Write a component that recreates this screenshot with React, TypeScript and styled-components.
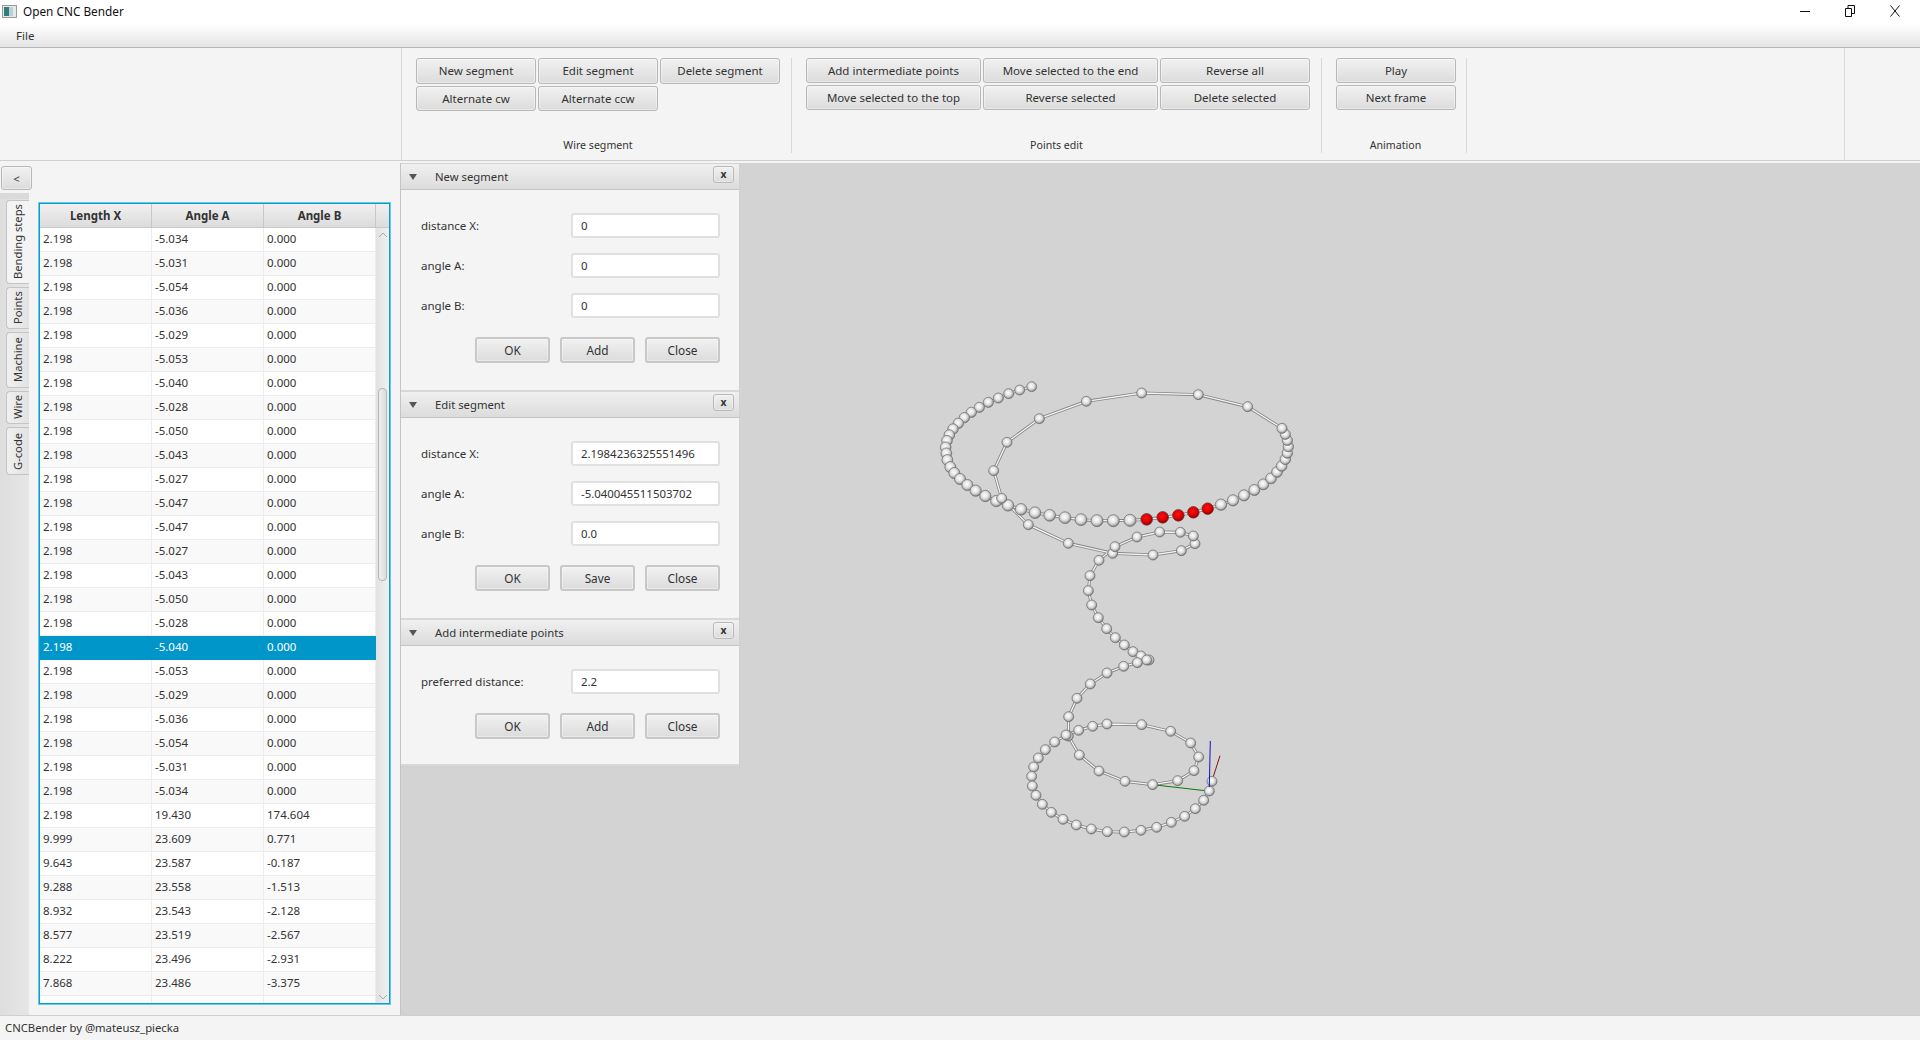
import React from "react";
import styled, { createGlobalStyle } from "styled-components";

const GlobalStyle = createGlobalStyle`
  html, body { margin: 0; padding: 0; height: 100%; overflow: hidden; }
  body {
    font-family: "Noto Sans", "Open Sans", sans-serif;
    font-size: 11.5px;
    color: #333;
    background: #f4f4f4;
  }
  * { box-sizing: border-box; }
`;

const Window = styled.div`
  width: 1920px;
  height: 1040px;
  display: flex;
  flex-direction: column;
  overflow: hidden;
`;

const TitleBar = styled.header`
  height: 24px;
  flex: none;
  background: #fff;
  display: flex;
  align-items: center;
  padding: 0 0 2px 2px;
  gap: 6px;
  color: #111;
  font-size: 11.8px;
`;

const TitleText = styled.span`
  flex: 1;
`;

const WindowControls = styled.div`
  display: flex;
  align-items: center;
  padding-right: 20px;
  gap: 35px;
`;

const MenuBar = styled.nav`
  height: 24px;
  flex: none;
  background: linear-gradient(#ffffff, #e4e4e4);
  border-bottom: 1px solid #b5b5b5;
  display: flex;
  align-items: center;
  padding-left: 16px;
`;

const Ribbon = styled.section`
  height: 113px;
  flex: none;
  background: #f4f4f4;
  border-bottom: 1px solid #cfcfcf;
  display: flex;
`;

const RibbonSpacer = styled.div<{ $width: number }>`
  width: ${(p) => p.$width}px;
  border-right: 1px solid #d8d8d8;
  flex: none;
`;

const RibbonGroup = styled.div<{ $width: number; $padding: number }>`
  width: ${(p) => p.$width}px;
  flex: none;
  margin: 10px 0 7px;
  padding: 0 0 0 ${(p) => p.$padding}px;
  border-right: 1px solid #d8d8d8;
  display: flex;
  flex-direction: column;
`;

const ButtonGrid = styled.div<{ $columns: string; $row: number }>`
  display: grid;
  grid-template-columns: ${(p) => p.$columns};
  grid-auto-rows: ${(p) => p.$row}px;
  gap: 2px;
`;

const GroupLabel = styled.div<{ $inset: number }>`
  margin-top: auto;
  height: 16px;
  line-height: 16px;
  font-size: 10.6px;
  text-align: center;
  padding-right: ${(p) => p.$inset}px;
`;

const Button = styled.button`
  font: inherit;
  color: #333;
  padding: 0;
  border: 1px solid #b8b8b8;
  border-radius: 3px;
  background: linear-gradient(#f1f1f1, #dcdcdc);
  box-shadow: inset 0 0 0 1px rgba(255, 255, 255, 0.35);
`;

const Main = styled.main`
  flex: 1;
  min-height: 0;
  display: flex;
  border-top: 2px solid #f4f4f4;
`;

const SidePanel = styled.aside`
  width: 400px;
  flex: none;
  background: #f4f4f4;
  display: flex;
  flex-direction: column;
  padding-top: 3px;
`;

const CollapseButton = styled(Button)`
  width: 31px;
  height: 24px;
  margin: 0 0 3px 1px;
  flex: none;
`;

const TabArea = styled.div`
  flex: 1;
  min-height: 0;
  display: flex;
`;

const TabStrip = styled.div`
  width: 29px;
  flex: none;
  background: linear-gradient(90deg, #dedede, #e6e6e6);
  border-top: 6px solid #dadada;
  padding: 1px 0 0 6px;
  display: flex;
  flex-direction: column;
  gap: 3px;
`;

const Tab = styled.div<{ $height: number; $active?: boolean }>`
  height: ${(p) => p.$height}px;
  background: ${(p) => (p.$active ? "#f4f4f4" : "linear-gradient(90deg, #e2e2e2, #f0f0f0)")};
  writing-mode: vertical-rl;
  transform: rotate(180deg);
  border: 1px solid #c4c4c4;
  border-left: none;
  border-radius: 0 4px 4px 0;
  display: flex;
  align-items: center;
  justify-content: center;
  font-size: 11.2px;
  line-height: 1;
`;

const TableHolder = styled.div`
  flex: 1;
  min-width: 0;
  padding: 10px 10px 11px;
`;

const Table = styled.div`
  height: 100%;
  border: 1px solid #039ed3;
  box-shadow: 0 0 0 1px #6cc6e6;
  background: #fff;
  display: flex;
  flex-direction: column;
`;

const TableHead = styled.div`
  height: 24px;
  flex: none;
  display: grid;
  grid-template-columns: 112px 112px 112px 1fr;
  background: linear-gradient(#f0f0f0, #dcdcdc);
  border-bottom: 1px solid #c8c8c8;
`;

const HeadCell = styled.div`
  display: flex;
  align-items: center;
  justify-content: center;
  font-weight: 700;
  font-size: 11.5px;
  border-right: 1px solid #c8c8c8;
`;

const TableBody = styled.div`
  flex: 1;
  min-height: 0;
  display: flex;
`;

const Rows = styled.div`
  width: 336px;
  flex: none;
  overflow: hidden;
`;

const Row = styled.div<{ $odd: boolean; $selected: boolean }>`
  height: 24px;
  display: grid;
  grid-template-columns: 112px 112px 112px;
  background: ${(p) => (p.$selected ? "#0096c9" : p.$odd ? "#f9f9f9" : "#fff")};
  color: ${(p) => (p.$selected ? "#fff" : "#333")};
  border-bottom: 1px solid ${(p) => (p.$selected ? "#0096c9" : "#ececec")};
`;

const Cell = styled.div<{ $selected: boolean }>`
  display: flex;
  align-items: center;
  padding: 0 0 2px 3px;
  border-right: 1px solid ${(p) => (p.$selected ? "#0096c9" : "#ececec")};
`;

const ScrollBar = styled.div`
  flex: 1;
  background: linear-gradient(90deg, #e2e2e2, #f0f0f0);
  display: flex;
  flex-direction: column;
  align-items: center;
  padding: 4px 0 3px;
`;

const ScrollThumb = styled.div`
  width: 9px;
  height: 193px;
  margin-top: 150px;
  border: 1px solid #b5b5b5;
  border-radius: 4px;
  background: linear-gradient(90deg, #efefef, #dcdcdc);
`;

const ScrollArrow = styled.svg<{ $end?: boolean }>`
  width: 10px;
  height: 6px;
  flex: none;
  margin-top: ${(p) => (p.$end ? "auto" : "0")};
`;

const Viewport = styled.div`
  flex: 1;
  min-width: 0;
  display: flex;
  align-items: flex-start;
  background: #d3d3d3;
  border-left: 1px solid #c4c4c4;
`;

const Accordion = styled.div`
  width: 339px;
  flex: none;
  margin-top: 1px;
  background: #f4f4f4;
  border-right: 1px solid #d0d0d0;
  border-bottom: 1px solid #d0d0d0;
`;

const PaneTitle = styled.div`
  height: 26px;
  display: flex;
  align-items: center;
  padding: 0 5px 0 8px;
  background: linear-gradient(#f0f0f0, #dcdcdc);
  border-bottom: 1px solid #c4c4c4;
  font-size: 11.3px;
`;

const PaneName = styled.span`
  flex: 1;
  margin-left: 18px;
`;

const Arrow = styled.span`
  width: 0;
  height: 0;
  border-left: 4px solid transparent;
  border-right: 4px solid transparent;
  border-top: 6px solid #555;
`;

const PaneClose = styled(Button)`
  width: 21px;
  height: 17px;
  margin-top: -4px;
  font-size: 10.5px;
  font-weight: 700;
  line-height: 1;
`;

const PaneBody = styled.div<{ $bottom: number }>`
  padding: 23px 19px ${(p) => p.$bottom}px 20px;
  display: flex;
  flex-direction: column;
  border-bottom: 2px solid #d8d8d8;
`;

const FieldRow = styled.label`
  height: 25px;
  margin-bottom: 15px;
  display: flex;
  align-items: center;
  justify-content: space-between;
`;

const FieldInput = styled.input`
  width: 149px;
  height: 25px;
  font: inherit;
  font-size: 11.4px;
  color: #333;
  padding: 0 7px 1px 8px;
  border: 2px solid #e0e0e0;
  border-radius: 3px;
  background: #fff;
  outline: none;
`;

const PaneActions = styled.div`
  margin-top: 4px;
  display: flex;
  justify-content: flex-end;
  gap: 10px;
`;

const ActionButton = styled(Button)`
  width: 75px;
  height: 26px;
  font-size: 11.8px;
  border-width: 2px;
  border-color: #c8c8c8;
`;

const Scene = styled.svg`
  flex: 1;
  min-width: 0;
  height: 852px;
  display: block;
`;

const StatusBar = styled.footer`
  height: 25px;
  flex: none;
  background: #f4f4f4;
  border-top: 1px solid #cfcfcf;
  display: flex;
  align-items: center;
  padding: 0 0 2px 5px;
  font-size: 11.3px;
`;

const base = [
  "-5.034", "-5.031", "-5.054", "-5.036", "-5.029", "-5.053", "-5.040", "-5.028",
  "-5.050", "-5.043", "-5.027", "-5.047", "-5.047", "-5.027", "-5.043", "-5.050",
  "-5.028", "-5.040", "-5.053", "-5.029", "-5.036", "-5.054", "-5.031", "-5.034",
];

const rows: string[][] = [
  ...base.map((a) => ["2.198", a, "0.000"]),
  ["2.198", "19.430", "174.604"],
  ["9.999", "23.609", "0.771"],
  ["9.643", "23.587", "-0.187"],
  ["9.288", "23.558", "-1.513"],
  ["8.932", "23.543", "-2.128"],
  ["8.577", "23.519", "-2.567"],
  ["8.222", "23.496", "-2.931"],
  ["7.868", "23.486", "-3.375"],
  ["7.513", "23.480", "-3.793"],
];

const SELECTED_ROW = 17;

type P = [number, number];

// beads read from the reference, in two blocks of 3x crop coordinates
const upper = (pts: P[]): P[] => pts.map(([x, y]) => [930 + x / 3, 370 + y / 3]);
const lower = (pts: P[]): P[] => pts.map(([x, y]) => [1000 + x / 3, 590 + y / 3]);

const wireStart = upper([
  [305, 50], [269, 60], [236, 71], [205, 84], [175, 97], [148, 112], [124, 127], [103, 143],
  [85, 160], [69, 177], [58, 195], [51, 212], [47, 232], [49, 250], [52, 270], [61, 291],
  [73, 309], [90, 327], [112, 345], [137, 362], [166, 378], [199, 393], [234, 406], [273, 418],
  [315, 428], [359, 436], [405, 443], [453, 449], [501, 452], [550, 452], [600, 451],
]);
const wireRed = upper([[650, 448], [698, 442], [745, 436], [790, 427], [833, 416]]);
const wireMid = upper([
  [873, 404], [909, 391], [942, 376], [973, 360], [1000, 343], [1023, 325], [1041, 306],
  [1055, 288], [1066, 268], [1072, 249], [1075, 230], [1072, 211], [1066, 193], [1056, 175],
  [953, 110], [805, 74], [635, 69], [469, 94], [328, 146], [231, 217], [191, 302], [215, 385],
  [295, 464], [415, 520], [548, 550], [669, 555], [754, 542], [795, 521], [790, 498], [751, 487],
  [689, 486], [621, 501], [555, 530], [507, 571], [480, 617], [475, 662],
]);
const wireEnd = lower([
  [275, 45], [295, 83], [320, 116], [346, 143], [373, 165], [399, 185], [423, 198], [447, 210],
  [440, 210], [412, 218], [371, 229], [321, 249], [271, 282], [231, 325], [206, 380], [205, 438],
  [238, 495], [297, 543], [375, 574], [458, 584], [533, 572], [582, 542], [596, 501], [572, 459],
  [512, 424], [425, 404], [321, 402], [278, 409], [236, 421], [198, 435], [164, 456], [136, 479],
  [115, 504], [101, 531], [95, 559], [97, 588], [108, 616], [127, 643], [154, 667], [189, 688],
  [229, 705], [274, 717], [322, 725], [373, 726], [423, 721], [470, 712], [514, 697], [554, 679],
  [586, 656], [611, 631], [628, 603], [636, 574],
]);

const wire: P[] = [...wireStart, ...wireRed, ...wireMid, ...wireEnd];
const wirePath = wire.map(([x, y]) => `${x.toFixed(1)},${y.toFixed(1)}`).join(" ");

// near part of the top ring is drawn bigger, as the view has perspective
const beadRadius = (i: number) => {
  if (i < wireStart.length) return 4.9 + (1.2 * i) / wireStart.length;
  if (i < wireStart.length + wireRed.length + 14) return 5.9 - (0.9 * (i - wireStart.length)) / 19;
  return 5;
};

function WireScene() {
  return (
    <Scene viewBox="740 163 1180 852">
      <defs>
        <radialGradient id="bead" cx="45%" cy="42%" r="58%">
          <stop offset="0%" stopColor="#ffffff" />
          <stop offset="50%" stopColor="#e2e2e2" />
          <stop offset="80%" stopColor="#b4b4b4" />
          <stop offset="100%" stopColor="#666666" />
        </radialGradient>
        <radialGradient id="beadRed" cx="45%" cy="40%" r="60%">
          <stop offset="0%" stopColor="#ff1010" />
          <stop offset="70%" stopColor="#d80000" />
          <stop offset="100%" stopColor="#7a0000" />
        </radialGradient>
      </defs>
      <polyline points={wirePath} fill="none" stroke="#858585" strokeWidth={3} />
      <polyline points={wirePath} fill="none" stroke="#f4f4f4" strokeWidth={1.3} />
      <line x1={1152.7} y1={784.7} x2={1208} y2={791} stroke="#0a7a0a" strokeWidth={1} />
      <line x1={1220} y1={755.7} x2={1210} y2={787} stroke="#8a1010" strokeWidth={1} />
      {wire.map(([x, y], i) => (
        <circle key={i} cx={x} cy={y} r={beadRadius(i)} fill="url(#bead)" stroke="#777" strokeWidth={0.8} />
      ))}
      {wireRed.map(([x, y], i) => (
        <circle key={i} cx={x} cy={y} r={5.6} fill="url(#beadRed)" stroke="#8a1a1a" strokeWidth={0.6} />
      ))}
      <line x1={1210.3} y1={741} x2={1209.3} y2={787} stroke="#1010c8" strokeWidth={1} />
    </Scene>
  );
}

function AppIcon() {
  return (
    <svg width="15" height="13" viewBox="0 0 15 13">
      <rect x="0.5" y="0.5" width="14" height="12" fill="#e8e8e8" stroke="#9a9a9a" />
      <rect x="2" y="2" width="5" height="9" fill="#2f7d7d" />
      <rect x="7" y="2" width="4" height="9" fill="#b9d0d8" />
    </svg>
  );
}

function MinIcon() {
  return (
    <svg width="10" height="10" viewBox="0 0 10 10">
      <path d="M0 5.5h10" stroke="#111" fill="none" />
    </svg>
  );
}

function RestoreIcon() {
  return (
    <svg width="10" height="12" viewBox="0 0 10 12">
      <path d="M0.5 3.5h6v8h-6zM3 3.5v-3h6.5v8h-3" stroke="#111" fill="none" />
    </svg>
  );
}

function CloseIcon() {
  return (
    <svg width="10" height="12" viewBox="0 0 10 12">
      <path d="M0.5 0.5l9 11M9.5 0.5l-9 11" stroke="#111" fill="none" />
    </svg>
  );
}

type PaneProps = {
  title: string;
  fields: [string, string][];
  action: string;
  bottom: number;
};

function Pane({ title, fields, action, bottom }: PaneProps) {
  return (
    <section>
      <PaneTitle>
        <Arrow />
        <PaneName>{title}</PaneName>
        <PaneClose>x</PaneClose>
      </PaneTitle>
      <PaneBody $bottom={bottom}>
        {fields.map(([label, value]) => (
          <FieldRow key={label}>
            {label}
            <FieldInput defaultValue={value} />
          </FieldRow>
        ))}
        <PaneActions>
          <ActionButton>OK</ActionButton>
          <ActionButton>{action}</ActionButton>
          <ActionButton>Close</ActionButton>
        </PaneActions>
      </PaneBody>
    </section>
  );
}

export default function App() {
  return (
    <Window>
      <GlobalStyle />
      <TitleBar>
        <AppIcon />
        <TitleText>Open CNC Bender</TitleText>
        <WindowControls>
          <MinIcon />
          <RestoreIcon />
          <CloseIcon />
        </WindowControls>
      </TitleBar>
      <MenuBar>File</MenuBar>
      <Ribbon>
        <RibbonSpacer $width={402} />
        <RibbonGroup $width={390} $padding={14}>
          <ButtonGrid $columns="120px 120px 120px" $row={25.5}>
            <Button>New segment</Button>
            <Button>Edit segment</Button>
            <Button>Delete segment</Button>
            <Button>Alternate cw</Button>
            <Button>Alternate ccw</Button>
          </ButtonGrid>
          <GroupLabel $inset={11}>Wire segment</GroupLabel>
        </RibbonGroup>
        <RibbonGroup $width={530} $padding={14}>
          <ButtonGrid $columns="175px 175px 150px" $row={25}>
            <Button>Add intermediate points</Button>
            <Button>Move selected to the end</Button>
            <Button>Reverse all</Button>
            <Button>Move selected to the top</Button>
            <Button>Reverse selected</Button>
            <Button>Delete selected</Button>
          </ButtonGrid>
          <GroupLabel $inset={14}>Points edit</GroupLabel>
        </RibbonGroup>
        <RibbonGroup $width={145} $padding={14}>
          <ButtonGrid $columns="120px" $row={25}>
            <Button>Play</Button>
            <Button>Next frame</Button>
          </ButtonGrid>
          <GroupLabel $inset={11}>Animation</GroupLabel>
        </RibbonGroup>
        <RibbonSpacer $width={378} />
      </Ribbon>
      <Main>
        <SidePanel>
          <CollapseButton>&lt;</CollapseButton>
          <TabArea>
            <TabStrip>
              <Tab $height={84} $active>Bending steps</Tab>
              <Tab $height={42}>Points</Tab>
              <Tab $height={56}>Machine</Tab>
              <Tab $height={33}>Wire</Tab>
              <Tab $height={48}>G-code</Tab>
            </TabStrip>
            <TableHolder>
              <Table>
                <TableHead>
                  <HeadCell>Length X</HeadCell>
                  <HeadCell>Angle A</HeadCell>
                  <HeadCell>Angle B</HeadCell>
                </TableHead>
                <TableBody>
                  <Rows>
                    {rows.map((r, i) => (
                      <Row key={i} $odd={i % 2 === 1} $selected={i === SELECTED_ROW}>
                        {r.map((c, j) => (
                          <Cell key={j} $selected={i === SELECTED_ROW}>{c}</Cell>
                        ))}
                      </Row>
                    ))}
                  </Rows>
                  <ScrollBar>
                    <ScrollArrow viewBox="0 0 10 6">
                      <path d="M1 5l4-4 4 4" fill="none" stroke="#aaa" />
                    </ScrollArrow>
                    <ScrollThumb />
                    <ScrollArrow $end viewBox="0 0 10 6">
                      <path d="M1 1l4 4 4-4" fill="none" stroke="#aaa" />
                    </ScrollArrow>
                  </ScrollBar>
                </TableBody>
              </Table>
            </TableHolder>
          </TabArea>
        </SidePanel>
        <Viewport>
          <Accordion>
            <Pane
              title="New segment"
              action="Add"
              bottom={27}
              fields={[["distance X:", "0"], ["angle A:", "0"], ["angle B:", "0"]]}
            />
            <Pane
              title="Edit segment"
              action="Save"
              bottom={27}
              fields={[
                ["distance X:", "2.1984236325551496"],
                ["angle A:", "-5.040045511503702"],
                ["angle B:", "0.0"],
              ]}
            />
            <Pane
              title="Add intermediate points"
              action="Add"
              bottom={25}
              fields={[["preferred distance:", "2.2"]]}
            />
          </Accordion>
          <WireScene />
        </Viewport>
      </Main>
      <StatusBar>CNCBender by @mateusz_piecka</StatusBar>
    </Window>
  );
}
